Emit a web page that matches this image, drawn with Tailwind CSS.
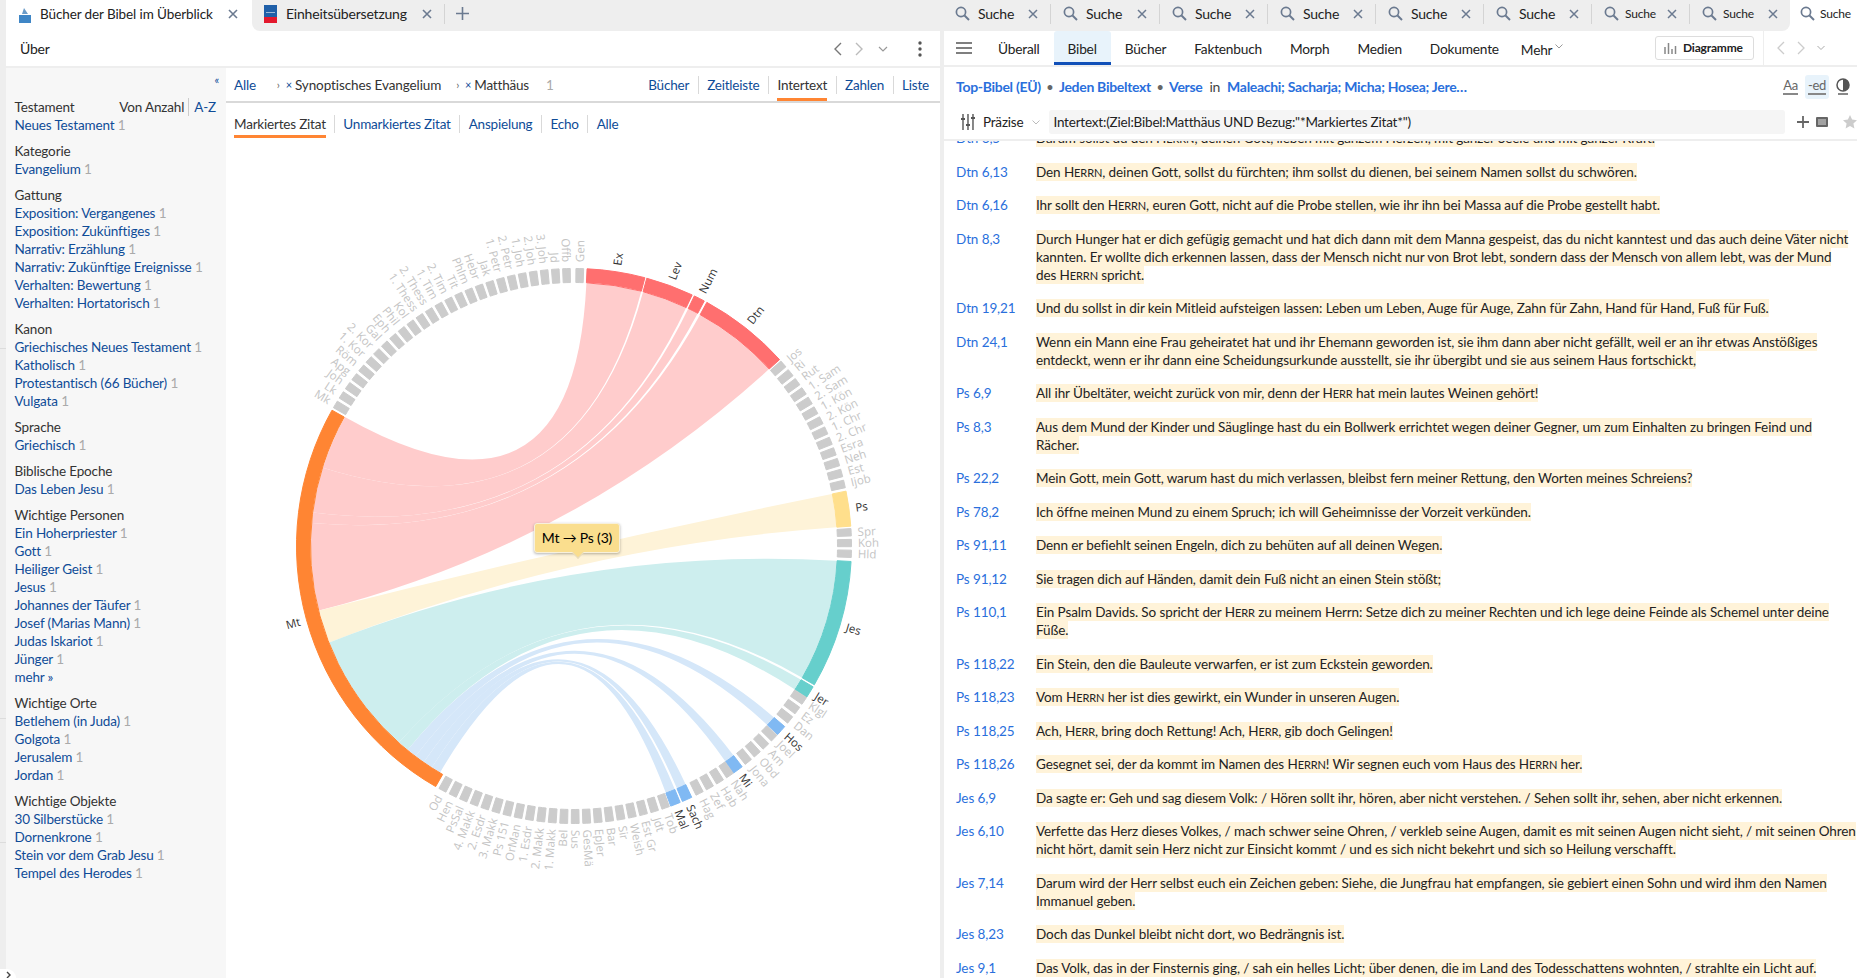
<!doctype html>
<html lang="de">
  <head>
    <meta charset="UTF-8" />
    <title>Bücher der Bibel im Überblick</title>
    <script src="https://cdn.jsdelivr.net/npm/@tailwindcss/browser@4"></script>
  </head>
  <body class="relative w-[1857px] h-[978px] overflow-hidden bg-[#eeeeee] [font-family:Lato,sans-serif] text-[13.5px] leading-[18px] tracking-[-0.2px] text-[#333]">
    <!-- tab strip -->
    <div class="flex h-[31px] bg-white">
      <div class="w-[6px] bg-[#eeeeee]"></div>
      <div class="w-[246px] flex items-center bg-white pb-[4px]">
        <svg width="12" height="18" viewBox="0 0 12 18" class="ml-[13px]"><rect width="12" height="18" fill="#fff"/><rect y="10" width="12" height="8" fill="#3f86c6"/><path d="M3 9l2-6 2 3 2 3z" fill="#6b9cc9"/></svg>
        <span class="ml-[9px] text-[#222] tracking-[-0.1px]">Bücher der Bibel im Überblick</span>
        <svg width="10" height="10" viewBox="0 0 10 10" class="ml-[15px]"><path d="M1 1l8 8M9 1l-8 8" stroke="#6b7a90" stroke-width="1.6"/></svg>
      </div>
      <div class="flex-1 flex items-center bg-[#eeeeee] rounded-b-lg pb-[4px]">
        <div class="flex items-center w-[192px] h-full">
          <svg width="13" height="18" viewBox="0 0 13 18" class="ml-[12px]"><rect width="13" height="12" fill="#1f5fa8"/><rect y="7" x="2" width="9" height="1" fill="#9db9d8"/><rect y="12" width="13" height="6" fill="#e3182d"/></svg>
          <span class="ml-[9px] text-[14px] text-[#222]">Einheitsübersetzung</span>
          <svg width="10" height="10" viewBox="0 0 10 10" class="ml-[15px]"><path d="M1 1l8 8M9 1l-8 8" stroke="#6b7a90" stroke-width="1.6"/></svg>
        </div>
        <div class="h-[20px] border-l border-[#d4d4d4]"></div>
        <svg width="13" height="13" viewBox="0 0 13 13" class="ml-[11px]"><path d="M6.5 0v13M0 6.5h13" stroke="#6b7a90" stroke-width="1.6"/></svg>
        <div id="search-tabs" class="ml-auto flex items-center h-full"></div>
      </div>
      <div class="w-[67px] flex items-center bg-white pb-[4px]">
        <svg width="15" height="15" viewBox="0 0 15 15" class="ml-[10px]"><circle cx="6" cy="6" r="4.6" fill="none" stroke="#6b7a90" stroke-width="1.7"/><path d="M9.5 9.5l4.5 4.5" stroke="#6b7a90" stroke-width="1.9"/></svg>
        <span class="ml-[5px] text-[12px] text-[#222]">Suche</span>
      </div>
    </div>

    <div class="flex h-[947px]">
      <!-- left panel -->
      <div class="ml-[6px] w-[934px] flex flex-col bg-white">
        <div class="flex items-center h-[37px] border-b-2 border-[#eeeeee] px-[14px]">
          <span class="text-[14px] text-[#222]">Über</span>
          <div class="ml-auto flex items-center mr-[4px]">
            <svg width="10" height="16" viewBox="0 0 10 16"><path d="M8 2L2 8l6 6" fill="none" stroke="#777" stroke-width="1.4"/></svg>
            <svg width="10" height="16" viewBox="0 0 10 16" class="ml-[11px]"><path d="M2 2l6 6-6 6" fill="none" stroke="#bbb" stroke-width="1.4"/></svg>
            <svg width="10" height="6" viewBox="0 0 10 6" class="ml-[14px]"><path d="M1 1l4 4 4-4" fill="none" stroke="#999" stroke-width="1.2"/></svg>
            <svg width="4" height="16" viewBox="0 0 4 16" class="ml-[30px]"><circle cx="2" cy="2" r="1.7" fill="#555"/><circle cx="2" cy="8" r="1.7" fill="#555"/><circle cx="2" cy="14" r="1.7" fill="#555"/></svg>
          </div>
        </div>
        <div class="flex flex-1 min-h-0">
          <!-- facets -->
          <div class="relative w-[220px] bg-[#f7f7f7] pt-[30px] pl-[8.5px] pr-[10px] tracking-[-0.15px]">
            <span class="absolute right-[7px] top-[3px] text-[11px] text-[#0f4c97]">«</span>
            <div class="mb-2">
              <div class="flex"><span>Testament</span><span class="ml-auto pr-[4px] border-r border-[#ccc]">Von Anzahl</span><span class="pl-[5px] text-[#0f4c97]">A-Z</span></div>
              <div class="text-[#0f4c97]">Neues Testament <span class="text-[#aaa]">1</span></div>
            </div>
            <div class="mb-2">
              <div>Kategorie</div>
              <div class="text-[#0f4c97]">Evangelium <span class="text-[#aaa]">1</span></div>
            </div>
            <div class="mb-2">
              <div>Gattung</div>
              <div class="text-[#0f4c97]">Exposition: Vergangenes <span class="text-[#aaa]">1</span></div>
              <div class="text-[#0f4c97]">Exposition: Zukünftiges <span class="text-[#aaa]">1</span></div>
              <div class="text-[#0f4c97]">Narrativ: Erzählung <span class="text-[#aaa]">1</span></div>
              <div class="text-[#0f4c97]">Narrativ: Zukünftige Ereignisse <span class="text-[#aaa]">1</span></div>
              <div class="text-[#0f4c97]">Verhalten: Bewertung <span class="text-[#aaa]">1</span></div>
              <div class="text-[#0f4c97]">Verhalten: Hortatorisch <span class="text-[#aaa]">1</span></div>
            </div>
            <div class="mb-2">
              <div>Kanon</div>
              <div class="text-[#0f4c97]">Griechisches Neues Testament <span class="text-[#aaa]">1</span></div>
              <div class="text-[#0f4c97]">Katholisch <span class="text-[#aaa]">1</span></div>
              <div class="text-[#0f4c97]">Protestantisch (66 Bücher) <span class="text-[#aaa]">1</span></div>
              <div class="text-[#0f4c97]">Vulgata <span class="text-[#aaa]">1</span></div>
            </div>
            <div class="mb-2">
              <div>Sprache</div>
              <div class="text-[#0f4c97]">Griechisch <span class="text-[#aaa]">1</span></div>
            </div>
            <div class="mb-2">
              <div>Biblische Epoche</div>
              <div class="text-[#0f4c97]">Das Leben Jesu <span class="text-[#aaa]">1</span></div>
            </div>
            <div class="mb-2">
              <div>Wichtige Personen</div>
              <div class="text-[#0f4c97]">Ein Hoherpriester <span class="text-[#aaa]">1</span></div>
              <div class="text-[#0f4c97]">Gott <span class="text-[#aaa]">1</span></div>
              <div class="text-[#0f4c97]">Heiliger Geist <span class="text-[#aaa]">1</span></div>
              <div class="text-[#0f4c97]">Jesus <span class="text-[#aaa]">1</span></div>
              <div class="text-[#0f4c97]">Johannes der Täufer <span class="text-[#aaa]">1</span></div>
              <div class="text-[#0f4c97]">Josef (Marias Mann) <span class="text-[#aaa]">1</span></div>
              <div class="text-[#0f4c97]">Judas Iskariot <span class="text-[#aaa]">1</span></div>
              <div class="text-[#0f4c97]">Jünger <span class="text-[#aaa]">1</span></div>
              <div class="text-[#0f4c97]">mehr »</div>
            </div>
            <div class="mb-2">
              <div>Wichtige Orte</div>
              <div class="text-[#0f4c97]">Betlehem (in Juda) <span class="text-[#aaa]">1</span></div>
              <div class="text-[#0f4c97]">Golgota <span class="text-[#aaa]">1</span></div>
              <div class="text-[#0f4c97]">Jerusalem <span class="text-[#aaa]">1</span></div>
              <div class="text-[#0f4c97]">Jordan <span class="text-[#aaa]">1</span></div>
            </div>
            <div class="mb-2">
              <div>Wichtige Objekte</div>
              <div class="text-[#0f4c97]">30 Silberstücke <span class="text-[#aaa]">1</span></div>
              <div class="text-[#0f4c97]">Dornenkrone <span class="text-[#aaa]">1</span></div>
              <div class="text-[#0f4c97]">Stein vor dem Grab Jesu <span class="text-[#aaa]">1</span></div>
              <div class="text-[#0f4c97]">Tempel des Herodes <span class="text-[#aaa]">1</span></div>
            </div>
          </div>

          <!-- main -->
          <div class="flex-1 flex flex-col min-w-0">
            <div class="flex items-center h-[35px] border-b-2 border-[#d9d9d9] pl-[8px] text-[#0f4c97]">
              <span>Alle</span>
              <span class="ml-[21px] text-[#666] text-[11px]">›</span>
              <span class="ml-[6px] text-[11px]">×</span>
              <span class="ml-[3px] text-[#333] tracking-[-0.1px]">Synoptisches Evangelium</span>
              <span class="ml-[15px] text-[#666] text-[11px]">›</span>
              <span class="ml-[6px] text-[11px]">×</span>
              <span class="ml-[3px] text-[#333]">Matthäus</span>
              <span class="ml-[17px] text-[#aaa]">1</span>
              <div class="ml-auto flex items-center h-full mr-[11px]">
                <span class="px-[8.5px] border-r border-[#d9d9d9]">Bücher</span>
                <span class="px-[8.5px] border-r border-[#d9d9d9]">Zeitleiste</span>
                <div class="px-[8.5px] h-full flex items-center">
                  <span class="h-full flex items-center border-b-[3px] border-[#ff8533] pt-[3px] text-[#333]">Intertext</span>
                </div>
                <span class="px-[8.5px] border-l border-r border-[#d9d9d9]">Zahlen</span>
                <span class="pl-[8.5px]">Liste</span>
              </div>
            </div>
            <div class="flex items-center h-[35px] pt-[6px] pl-[8px] text-[#0f4c97]">
              <div class="h-full flex items-center pr-[8px]">
                <span class="h-full flex items-center border-b-[3px] border-[#ff8533] pt-[3px] text-[#333]">Markiertes Zitat</span>
              </div>
              <span class="px-[8.5px] border-l border-r border-[#d9d9d9]">Unmarkiertes Zitat</span>
              <span class="px-[8.5px] border-r border-[#d9d9d9]">Anspielung</span>
              <span class="px-[8.5px] border-r border-[#d9d9d9]">Echo</span>
              <span class="px-[8.5px]">Alle</span>
            </div>
            <div class="relative flex-1">
              <svg id="chord" width="714" height="840" viewBox="0 0 714 840" class="block"></svg>
              <div class="absolute left-[308px] top-[385px] w-[86px] h-[30px] flex items-center justify-center bg-[#fade8e] border border-[#f7f0dc] rounded-[3px] shadow-[0_1px_3px_rgba(0,0,0,0.3)] text-[14px] text-black">
                Mt → Ps (3)
                <div class="absolute left-[39px] bottom-[-5px] w-[8px] h-[8px] rotate-45 bg-[#fade8e] border-r border-b border-[#e7dcc0]"></div>
              </div>
            </div>
          </div>
        </div>
      </div>

      <!-- right panel -->
      <div class="ml-[4px] flex-1 flex flex-col bg-white min-w-0">
        <div class="flex items-center h-[36px] border-b-2 border-[#eeeeee] text-[#222]">
          <svg width="16" height="12" viewBox="0 0 16 12" class="ml-[12px]"><path d="M0 1h16M0 6h16M0 11h16" stroke="#555" stroke-width="1.6"/></svg>
          <div class="ml-[12px] flex h-full text-[13.7px]">
            <span class="px-[14px] pt-[1px] flex items-center">Überall</span>
            <span class="px-[14px] flex items-center bg-[#e8f3fb] border-b-[3px] border-[#1150b8] rounded-t-[3px] pt-[4px]">Bibel</span>
            <span class="px-[14px] pt-[1px] flex items-center">Bücher</span>
            <span class="px-[14px] pt-[1px] flex items-center">Faktenbuch</span>
            <span class="px-[14px] pt-[1px] flex items-center">Morph</span>
            <span class="px-[14px] pt-[1px] flex items-center">Medien</span>
            <span class="px-[14px] pt-[1px] flex items-center">Dokumente</span>
            <span class="pl-[8px] flex items-center pt-[3px]">Mehr</span>
            <svg width="8" height="5" viewBox="0 0 8 5" class="ml-[3px] mt-[13px]"><path d="M.5.5l3.5 3.5 3.5-3.5" fill="none" stroke="#999"/></svg>
          </div>
          <div class="ml-auto flex items-center h-full">
            <div class="flex items-center h-[24px] w-[99px] border border-[#ddd] rounded-[3px] pl-[8px] text-[12px] font-bold">
              <svg width="14" height="12" viewBox="0 0 14 12"><path d="M1 5v7M4.5 1v11M8 7v5M11.5 4v8" stroke="#888" stroke-width="1.5"/></svg>
              <span class="ml-[5px]">Diagramme</span>
            </div>
            <div class="ml-[9px] h-full border-l border-[#eeeeee]"></div>
            <svg width="10" height="16" viewBox="0 0 10 16" class="ml-[12px]"><path d="M8 2L2 8l6 6" fill="none" stroke="#ccc" stroke-width="1.3"/></svg>
            <svg width="10" height="16" viewBox="0 0 10 16" class="ml-[10px]"><path d="M2 2l6 6-6 6" fill="none" stroke="#ccc" stroke-width="1.3"/></svg>
            <svg width="8" height="6" viewBox="0 0 8 6" class="ml-[11px]"><path d="M.5 1l3.5 3.5L7.5 1" fill="none" stroke="#aaa"/></svg>
            <svg width="3" height="16" viewBox="0 0 3 16" class="ml-[32px] mr-[-3px]"><circle cx="1.5" cy="2" r="1.5" fill="#555"/><circle cx="1.5" cy="8" r="1.5" fill="#555"/><circle cx="1.5" cy="14" r="1.5" fill="#555"/></svg>
          </div>
        </div>
        <div class="relative flex items-center h-[43px] pl-[12px] pb-[4px] text-[14px] font-bold tracking-[-0.3px] text-[#2a6fdc]">
          <span>Top-Bibel (EÜ)</span>
          <span class="mx-[6px] text-[#666] text-[11px]">•</span>
          <span>Jeden Bibeltext</span>
          <span class="mx-[6px] text-[#666] text-[11px]">•</span>
          <span>Verse</span>
          <span class="mx-[7px] font-normal text-[#444]">in</span>
          <span>Maleachi; Sacharja; Micha; Hosea; Jere…</span>
          <div class="ml-auto flex items-center font-normal text-[#666] text-[13px] mr-[5px]">
            <span class="border-b-2 border-[#888] leading-[15px]">Aa</span>
            <div class="ml-[7px] flex items-center justify-center w-[24px] h-[24px] bg-[#e8f3fb] rounded-[3px]"><span class="border-b-2 border-[#888] leading-[15px]">-ed</span></div>
            <svg width="16" height="18" viewBox="0 0 16 18" class="ml-[7px]"><circle cx="7" cy="7" r="6" fill="#fff" stroke="#555" stroke-width="1.5"/><path d="M7 1a6 6 0 010 12z" fill="#555"/><path d="M2 16h10" stroke="#888" stroke-width="2"/></svg>
          </div>
        </div>
        <div class="flex items-center h-[24px] text-[#222]">
          <svg width="16" height="16" viewBox="0 0 16 16" class="ml-[16px]"><path d="M3 0v16M8 0v16M13 0v16" stroke="#555" stroke-width="1.4"/><path d="M1 5h4M6 11h4M11 4h4" stroke="#555" stroke-width="2"/></svg>
          <span class="ml-[7px]">Präzise</span>
          <svg width="8" height="5" viewBox="0 0 8 5" class="ml-[9px]"><path d="M.5.5l3.5 3.5 3.5-3.5" fill="none" stroke="#bbb"/></svg>
          <div class="ml-[9px] flex items-center w-[736px] h-full px-[4px] bg-[#f5f5f5] rounded-[3px]">Intertext:(Ziel:Bibel:Matthäus UND Bezug:"*Markiertes Zitat*")</div>
          <svg width="12" height="12" viewBox="0 0 12 12" class="ml-[12px]"><path d="M6 0v12M0 6h12" stroke="#666" stroke-width="1.8"/></svg>
          <svg width="12" height="10" viewBox="0 0 12 10" class="ml-[7px]"><rect width="12" height="10" rx="1" fill="#666"/><path d="M2 3h8M2 5h8M2 7h8" stroke="#fff" stroke-width=".8"/></svg>
          <svg width="14" height="14" viewBox="0 0 14 14" class="ml-[15px] shrink-0"><path d="M7 0l2.1 4.6 4.9.6-3.6 3.4 1 4.9L7 11l-4.4 2.5 1-4.9L0 5.2l4.9-.6z" fill="#ccc"/></svg>
        </div>
        <div class="mt-[5px] flex-1 min-h-0 overflow-hidden border-t-2 border-[#eeeeee]">
          <div id="results" class="pl-[12px] mt-[-12px] tracking-[-0.1px]"></div>
        </div>
      </div>
    </div>

    <!-- ghost lines in the left gutter -->
    <div class="absolute left-0 top-[348px] w-[6px] border-t border-[#dcdcdc]"></div>
    <div class="absolute left-0 top-[718px] w-[6px] border-t border-[#dcdcdc]"></div>
    <div class="absolute left-0 top-[842px] w-[6px] border-t border-[#dcdcdc]"></div>
    <!-- collapse handle -->
    <div class="absolute left-[-8px] bottom-[-9px] w-[24px] h-[18px] rounded-full bg-white flex items-start justify-center pt-[2px]">
      <svg width="6" height="8" viewBox="0 0 6 8" class="ml-[10px]"><path d="M1 1l3 3-3 3" fill="none" stroke="#444" stroke-width="1.4"/></svg>
    </div>

    <script>
      // search tabs in the strip
      const tabWidths = [108, 109, 108, 108, 108, 108, 98, 100];
      document.getElementById('search-tabs').innerHTML = tabWidths
        .map((w, i) => {
          const small = i > 5;
          return `<div class="flex items-center h-[20px] ${i < 7 ? 'border-r border-[#d4d4d4]' : ''}" style="width:${w}px">
            <svg width="15" height="15" viewBox="0 0 15 15" class="ml-[12px] shrink-0"><circle cx="6" cy="6" r="4.6" fill="none" stroke="#6b7a90" stroke-width="1.7"/><path d="M9.5 9.5l4.5 4.5" stroke="#6b7a90" stroke-width="1.9"/></svg>
            <span class="${small ? 'ml-[6px] text-[12px]' : 'ml-[8px] text-[14px]'} text-[#222]">Suche</span>
            <svg width="10" height="10" viewBox="0 0 10 10" class="ml-auto mr-[12px]"><path d="M1 1l8 8M9 1l-8 8" stroke="#6b7a90" stroke-width="1.5"/></svg>
          </div>`;
        })
        .join('');

      // verse list, ~ marks the part of a word set in smaller capitals
      const verses = [
        ['Dtn 6,5', 'Darum sollst du den H~ERRN~, deinen Gott, lieben mit ganzem Herzen, mit ganzer Seele und mit ganzer Kraft.'],
        ['Dtn 6,13', 'Den H~ERRN~, deinen Gott, sollst du fürchten; ihm sollst du dienen, bei seinem Namen sollst du schwören.'],
        ['Dtn 6,16', 'Ihr sollt den H~ERRN~, euren Gott, nicht auf die Probe stellen, wie ihr ihn bei Massa auf die Probe gestellt habt.'],
        ['Dtn 8,3', 'Durch Hunger hat er dich gefügig gemacht und hat dich dann mit dem Manna gespeist, das du nicht kanntest und das auch deine Väter nicht|kannten. Er wollte dich erkennen lassen, dass der Mensch nicht nur von Brot lebt, sondern dass der Mensch von allem lebt, was der Mund|des H~ERRN~ spricht.'],
        ['Dtn 19,21', 'Und du sollst in dir kein Mitleid aufsteigen lassen: Leben um Leben, Auge für Auge, Zahn für Zahn, Hand für Hand, Fuß für Fuß.'],
        ['Dtn 24,1', 'Wenn ein Mann eine Frau geheiratet hat und ihr Ehemann geworden ist, sie ihm dann aber nicht gefällt, weil er an ihr etwas Anstößiges|entdeckt, wenn er ihr dann eine Scheidungsurkunde ausstellt, sie ihr übergibt und sie aus seinem Haus fortschickt,'],
        ['Ps 6,9', 'All ihr Übeltäter, weicht zurück von mir, denn der H~ERR~ hat mein lautes Weinen gehört!'],
        ['Ps 8,3', 'Aus dem Mund der Kinder und Säuglinge hast du ein Bollwerk errichtet wegen deiner Gegner, um zum Einhalten zu bringen Feind und|Rächer.'],
        ['Ps 22,2', 'Mein Gott, mein Gott, warum hast du mich verlassen, bleibst fern meiner Rettung, den Worten meines Schreiens?'],
        ['Ps 78,2', 'Ich öffne meinen Mund zu einem Spruch; ich will Geheimnisse der Vorzeit verkünden.'],
        ['Ps 91,11', 'Denn er befiehlt seinen Engeln, dich zu behüten auf all deinen Wegen.'],
        ['Ps 91,12', 'Sie tragen dich auf Händen, damit dein Fuß nicht an einen Stein stößt;'],
        ['Ps 110,1', 'Ein Psalm Davids. So spricht der H~ERR~ zu meinem Herrn: Setze dich zu meiner Rechten und ich lege deine Feinde als Schemel unter deine|Füße.'],
        ['Ps 118,22', 'Ein Stein, den die Bauleute verwarfen, er ist zum Eckstein geworden.'],
        ['Ps 118,23', 'Vom H~ERRN~ her ist dies gewirkt, ein Wunder in unseren Augen.'],
        ['Ps 118,25', 'Ach, H~ERR~, bring doch Rettung! Ach, H~ERR~, gib doch Gelingen!'],
        ['Ps 118,26', 'Gesegnet sei, der da kommt im Namen des H~ERRN~! Wir segnen euch vom Haus des H~ERRN~ her.'],
        ['Jes 6,9', 'Da sagte er: Geh und sag diesem Volk: / Hören sollt ihr, hören, aber nicht verstehen. / Sehen sollt ihr, sehen, aber nicht erkennen.'],
        ['Jes 6,10', 'Verfette das Herz dieses Volkes, / mach schwer seine Ohren, / verkleb seine Augen, damit es mit seinen Augen nicht sieht, / mit seinen Ohren|nicht hört, damit sein Herz nicht zur Einsicht kommt / und es sich nicht bekehrt und sich so Heilung verschafft.'],
        ['Jes 7,14', 'Darum wird der Herr selbst euch ein Zeichen geben: Siehe, die Jungfrau hat empfangen, sie gebiert einen Sohn und wird ihm den Namen|Immanuel geben.'],
        ['Jes 8,23', 'Doch das Dunkel bleibt nicht dort, wo Bedrängnis ist.'],
        ['Jes 9,1', 'Das Volk, das in der Finsternis ging, / sah ein helles Licht; über denen, die im Land des Todesschattens wohnten, / strahlte ein Licht auf.'],
      ];
      document.getElementById('results').innerHTML = verses
        .map(([ref, text]) => {
          const body = text
            .replace(/~(.*?)~/g, '<span class="text-[11px] leading-[1px]">$1</span>')
            .replace(/\|/g, '<br>');
          return `<div class="flex mb-[15.5px]">
            <span class="w-[80px] shrink-0 text-[#2a6fdc]">${ref}</span>
            <p class="whitespace-nowrap text-[#222]"><span class="bg-[#fff3d9] py-px">${body}</span></p>
          </div>`;
        })
        .join('');

      // chord diagram, angles in degrees clockwise from the top
      const cx = 348, cy = 408, rOut = 277.5, rIn = 263.5, rRib = 263;
      const pt = (r, a) => {
        const t = ((a - 90) * Math.PI) / 180;
        return [(cx + r * Math.cos(t)).toFixed(2), (cy + r * Math.sin(t)).toFixed(2)];
      };
      const arcSeg = (a0, a1) => {
        const [x0, y0] = pt(rOut, a0), [x1, y1] = pt(rOut, a1), [x2, y2] = pt(rIn, a1), [x3, y3] = pt(rIn, a0);
        const big = a1 - a0 > 180 ? 1 : 0;
        return `M${x0} ${y0}A${rOut} ${rOut} 0 ${big} 1 ${x1} ${y1}L${x2} ${y2}A${rIn} ${rIn} 0 ${big} 0 ${x3} ${y3}Z`;
      };
      const ribbon = (t0, t1, m0, m1) => {
        const [ax, ay] = pt(rRib, t0), [bx, by] = pt(rRib, t1), [lx, ly] = pt(rRib, m0), [ux, uy] = pt(rRib, m1);
        return `M${ax} ${ay}A${rRib} ${rRib} 0 0 1 ${bx} ${by}Q${cx} ${cy} ${lx} ${ly}A${rRib} ${rRib} 0 0 1 ${ux} ${uy}Q${cx} ${cy} ${ax} ${ay}Z`;
      };

      // hit books: name, from, to, ring colour, ribbon colour
      const hits = [
        ['Ex', 2.7, 14.8, '#ff6f6f', '#ffcccc'],
        ['Lev', 15.2, 25.2, '#ff6f6f', '#ffcccc'],
        ['Num', 25.7, 28, '#ff6f6f', '#ffcccc'],
        ['Dtn', 28.6, 47.8, '#ff6f6f', '#ffcccc'],
        ['Ps', 78.6, 85.9, '#ffdf8c', '#fef3d8'],
        ['Jes', 93.2, 120, '#66cfcc', '#cdeeee'],
        ['Jer', 120.5, 123, '#66cfcc', '#cdeeee'],
        ['Hos', 130.6, 132.8, '#80b9f3', '#d5e7f9'],
        ['Mi', 142.7, 144.9, '#80b9f3', '#d5e7f9'],
        ['Sach', 154.9, 157, '#80b9f3', '#d5e7f9'],
        ['Mal', 157.5, 159.6, '#80b9f3', '#d5e7f9'],
      ];
      const gray = [
        [0.4, 2.35, ['Gen']],
        [48.2, 2.34, ['Jos', 'Ri', 'Rut', '1. Sam', '2. Sam', '1. Kön', '2. Kön', '1. Chr', '2. Chr', 'Esra', 'Neh', 'Est', 'Ijob']],
        [86.4, 2.23, ['Spr', 'Koh', 'Hld']],
        [123.1, 2.45, ['Klgl', 'Ez', 'Dan']],
        [133, 2.42, ['Joel', 'Am', 'Obd', 'Jona']],
        [145, 2.42, ['Nah', 'Hab', 'Zef', 'Hag']],
        [159.9, 2.38, ['Tob', 'Jdt', 'Est Gr', 'Weish', 'Sir', 'Bar', 'EpJer', 'GesMä', 'Sus', 'Bel', '1. Makk', '2. Makk', '1. Esdr', 'OrMan', 'Ps 151', '3. Makk', '2. Esdr', '4. Makk', 'PsSal', 'Hen', 'Od']],
        [299.9, 2.31, ['Mk', 'Lk', 'Joh', 'Apg', 'Röm', '1. Kor', '2. Kor', 'Gal', 'Eph', 'Phil', 'Kol', '1. Thess', '2. Thess', '1. Tim', '2. Tim', 'Tit', 'Phlm', 'Hebr', 'Jak', '1. Petr', '2. Petr', '1. Joh', '2. Joh', '3. Joh', 'Jd', 'Offb']],
      ];

      const label = (name, mid, color) => {
        const [x, y] = pt(284, mid);
        const norm = ((mid % 360) + 360) % 360;
        const right = norm < 180;
        const rot = right ? norm - 90 : norm + 90;
        return `<text x="${x}" y="${y}" dy="0.35em" transform="rotate(${rot.toFixed(1)} ${x} ${y})" text-anchor="${right ? 'start' : 'end'}" font-family="Open Sans" font-size="11.5" letter-spacing="0" fill="${color}">${name}</text>`;
      };

      let ribbons = '', rings = '', labels = '';
      let mt = 299.4;
      hits.forEach(([name, a0, a1, ring, rib]) => {
        const span = a1 - a0;
        ribbons += `<path d="${ribbon(a0, a1, mt - span, mt)}" fill="${rib}"/>`;
        mt -= span;
        rings += `<path d="${arcSeg(a0, a1)}" fill="${ring}" stroke="${ring}" stroke-linejoin="round"/>`;
        labels += label(name, (a0 + a1) / 2, '#333');
      });
      rings += `<path d="${arcSeg(209.9, 299.3)}" fill="#ff8533" stroke="#ff8533" stroke-linejoin="round"/>`;
      labels += label('Mt', 254.6, '#333');
      gray.forEach(([start, pitch, names]) => {
        names.forEach((name, i) => {
          const a0 = start + i * pitch;
          const a1 = a0 + pitch * 0.68;
          rings += `<path d="${arcSeg(a0, a1)}" fill="#cccccc" stroke="#cccccc" stroke-linejoin="round"/>`;
          labels += label(name, (a0 + a1) / 2, '#c4c4c4');
        });
      });
      document.getElementById('chord').innerHTML = ribbons + rings + labels;
    </script>
  </body>
</html>
